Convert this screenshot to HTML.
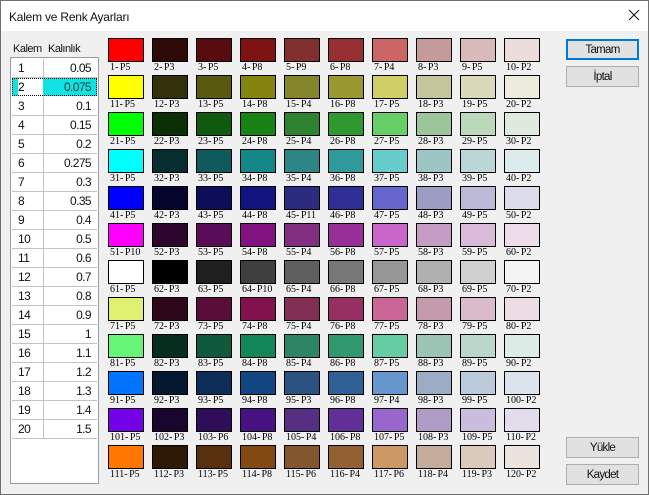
<!DOCTYPE html>
<html lang="tr"><head><meta charset="utf-8"><title>Kalem ve Renk Ayarları</title>
<style>
*{box-sizing:border-box}
html,body{margin:0;padding:0;width:649px;height:495px;overflow:hidden;background:#f0f0f0}
body{position:relative;font-family:"Liberation Sans",sans-serif;color:#000}
.win{position:absolute;left:0;top:0;width:649px;height:495px;border:1px solid #6f6f6f;background:#f0f0f0}
.tb{position:absolute;left:1px;top:1px;width:647px;height:30px;background:#fff}
.ttl{position:absolute;left:8px;top:8px;font-size:12px;letter-spacing:-.22px;line-height:16px;color:#111}
.x{position:absolute;left:627px;top:8px}
.hd{position:absolute;top:42px;font-size:11px;letter-spacing:-.5px;line-height:14px;color:#111}
.list{position:absolute;left:10px;top:57px;width:89px;height:427px;background:#fff;border:1px solid #9a9ca3}
.r{position:absolute;left:1px;width:85px;height:19px;border-bottom:1px solid #c2c2c2;font-size:12px;line-height:19px;color:#111}
.r s{position:absolute;left:31px;top:0;width:1px;height:19px;background:#c2c2c2}
.r u{position:absolute;left:6px;top:0;text-decoration:none;letter-spacing:-.5px}
.r b{position:absolute;right:6px;top:0;font-weight:normal;letter-spacing:-.6px}
.sel{position:absolute;left:1px;top:20px;width:85px;height:18px;border:1px dotted #000;background:linear-gradient(90deg,#12e2e2 0 5px,#fff 5px 30px,#12e2e2 30px);font-size:12px;line-height:17px}
.sel u{position:absolute;left:5px;top:0;text-decoration:none}
.sel b{position:absolute;right:5px;top:0;font-weight:normal;color:#063c3c;letter-spacing:-.6px}
.g{position:absolute;left:108px;top:38px;display:grid;grid-template-columns:repeat(10,44px);grid-auto-rows:37px}
.g div{position:relative;width:44px;height:37px}
.g i{display:block;width:36px;height:24px;border:1px solid #000}
.g b{position:absolute;left:2px;top:23px;font:normal 10px/13px "Liberation Serif",serif;white-space:pre;word-spacing:-1px;color:#000}
.btn{position:absolute;left:566px;width:73px;height:21px;background:#e1e1e1;border:1px solid #adadad;font-size:11.5px;letter-spacing:-.7px;line-height:21px;text-align:center;color:#111}
.def{border:2px solid #0078d7;line-height:19px}
</style></head><body>
<div class="win"></div>
<div class="tb"><div class="ttl">Kalem ve Renk Ayarları</div>
<svg class="x" width="12" height="12" viewBox="0 0 12 12"><path d="M1 1L11 11M11 1L1 11" stroke="#111" stroke-width="1" fill="none"/></svg></div>
<div class="hd" style="left:13px">Kalem</div><div class="hd" style="left:48px">Kalınlık</div>
<div class="list">
<div class="r" style="top:1px"><s></s><u>1</u><b>0.05</b></div>
<div class="sel"><u>2</u><b>0.075</b></div>
<div class="r" style="top:39px"><s></s><u>3</u><b>0.1</b></div>
<div class="r" style="top:58px"><s></s><u>4</u><b>0.15</b></div>
<div class="r" style="top:77px"><s></s><u>5</u><b>0.2</b></div>
<div class="r" style="top:96px"><s></s><u>6</u><b>0.275</b></div>
<div class="r" style="top:115px"><s></s><u>7</u><b>0.3</b></div>
<div class="r" style="top:134px"><s></s><u>8</u><b>0.35</b></div>
<div class="r" style="top:153px"><s></s><u>9</u><b>0.4</b></div>
<div class="r" style="top:172px"><s></s><u>10</u><b>0.5</b></div>
<div class="r" style="top:191px"><s></s><u>11</u><b>0.6</b></div>
<div class="r" style="top:210px"><s></s><u>12</u><b>0.7</b></div>
<div class="r" style="top:229px"><s></s><u>13</u><b>0.8</b></div>
<div class="r" style="top:248px"><s></s><u>14</u><b>0.9</b></div>
<div class="r" style="top:267px"><s></s><u>15</u><b>1</b></div>
<div class="r" style="top:286px"><s></s><u>16</u><b>1.1</b></div>
<div class="r" style="top:305px"><s></s><u>17</u><b>1.2</b></div>
<div class="r" style="top:324px"><s></s><u>18</u><b>1.3</b></div>
<div class="r" style="top:343px"><s></s><u>19</u><b>1.4</b></div>
<div class="r" style="top:362px"><s></s><u>20</u><b>1.5</b></div>
</div>
<div class="g">
<div><i style="background:#ff0000"></i><b>1- P5</b></div><div><i style="background:#2d0a06"></i><b>2- P3</b></div><div><i style="background:#590c10"></i><b>3- P5</b></div><div><i style="background:#7f1212"></i><b>4- P8</b></div><div><i style="background:#822f2f"></i><b>5- P9</b></div><div><i style="background:#972f32"></i><b>6- P8</b></div><div><i style="background:#cc6666"></i><b>7- P4</b></div><div><i style="background:#c49a9a"></i><b>8- P3</b></div><div><i style="background:#d9baba"></i><b>9- P5</b></div><div><i style="background:#ecdcdc"></i><b>10- P2</b></div>
<div><i style="background:#ffff00"></i><b>11- P5</b></div><div><i style="background:#33300a"></i><b>12- P3</b></div><div><i style="background:#5a5a0e"></i><b>13- P5</b></div><div><i style="background:#84840f"></i><b>14- P8</b></div><div><i style="background:#85852c"></i><b>15- P4</b></div><div><i style="background:#99992f"></i><b>16- P8</b></div><div><i style="background:#cfcf66"></i><b>17- P5</b></div><div><i style="background:#c5c59b"></i><b>18- P3</b></div><div><i style="background:#dadabb"></i><b>19- P5</b></div><div><i style="background:#ecebdc"></i><b>20- P2</b></div>
<div><i style="background:#00ff00"></i><b>21- P5</b></div><div><i style="background:#0a2e06"></i><b>22- P3</b></div><div><i style="background:#0f5a0e"></i><b>23- P5</b></div><div><i style="background:#188314"></i><b>24- P8</b></div><div><i style="background:#2e8230"></i><b>25- P4</b></div><div><i style="background:#2f992f"></i><b>26- P8</b></div><div><i style="background:#66cf66"></i><b>27- P5</b></div><div><i style="background:#9dc59b"></i><b>28- P3</b></div><div><i style="background:#bbd8bb"></i><b>29- P5</b></div><div><i style="background:#ddeadd"></i><b>30- P2</b></div>
<div><i style="background:#00ffff"></i><b>31- P5</b></div><div><i style="background:#062d30"></i><b>32- P3</b></div><div><i style="background:#0f5a5c"></i><b>33- P5</b></div><div><i style="background:#138787"></i><b>34- P8</b></div><div><i style="background:#2e8585"></i><b>35- P4</b></div><div><i style="background:#309999"></i><b>36- P8</b></div><div><i style="background:#66cccc"></i><b>37- P5</b></div><div><i style="background:#9cc5c5"></i><b>38- P3</b></div><div><i style="background:#bbd6d6"></i><b>39- P5</b></div><div><i style="background:#dcecec"></i><b>40- P2</b></div>
<div><i style="background:#0000ff"></i><b>41- P5</b></div><div><i style="background:#05052d"></i><b>42- P3</b></div><div><i style="background:#0d0d59"></i><b>43- P5</b></div><div><i style="background:#13137f"></i><b>44- P8</b></div><div><i style="background:#2b2b80"></i><b>45- P11</b></div><div><i style="background:#302f96"></i><b>46- P8</b></div><div><i style="background:#6666cc"></i><b>47- P5</b></div><div><i style="background:#9d9dc4"></i><b>48- P3</b></div><div><i style="background:#bbbbd8"></i><b>49- P5</b></div><div><i style="background:#dcdcea"></i><b>50- P2</b></div>
<div><i style="background:#ff00ff"></i><b>51- P10</b></div><div><i style="background:#2d062d"></i><b>52- P3</b></div><div><i style="background:#590d59"></i><b>53- P5</b></div><div><i style="background:#821482"></i><b>54- P8</b></div><div><i style="background:#822f82"></i><b>55- P4</b></div><div><i style="background:#962f96"></i><b>56- P8</b></div><div><i style="background:#c966c9"></i><b>57- P5</b></div><div><i style="background:#c49cc4"></i><b>58- P3</b></div><div><i style="background:#d9bbd9"></i><b>59- P5</b></div><div><i style="background:#ecdcec"></i><b>60- P2</b></div>
<div><i style="background:#ffffff"></i><b>61- P5</b></div><div><i style="background:#000000"></i><b>62- P3</b></div><div><i style="background:#1f1f1f"></i><b>63- P5</b></div><div><i style="background:#3f3f3f"></i><b>64- P10</b></div><div><i style="background:#5f5f5f"></i><b>65- P4</b></div><div><i style="background:#787878"></i><b>66- P8</b></div><div><i style="background:#979797"></i><b>67- P5</b></div><div><i style="background:#b0b0b0"></i><b>68- P3</b></div><div><i style="background:#d0d0d0"></i><b>69- P5</b></div><div><i style="background:#f4f4f4"></i><b>70- P2</b></div>
<div><i style="background:#e0f070"></i><b>71- P5</b></div><div><i style="background:#2d0619"></i><b>72- P3</b></div><div><i style="background:#590d38"></i><b>73- P5</b></div><div><i style="background:#82124e"></i><b>74- P8</b></div><div><i style="background:#822f56"></i><b>75- P4</b></div><div><i style="background:#962f62"></i><b>76- P8</b></div><div><i style="background:#c96696"></i><b>77- P5</b></div><div><i style="background:#c49aac"></i><b>78- P3</b></div><div><i style="background:#d9bbcb"></i><b>79- P5</b></div><div><i style="background:#ecdce4"></i><b>80- P2</b></div>
<div><i style="background:#66f576"></i><b>81- P5</b></div><div><i style="background:#062d1e"></i><b>82- P3</b></div><div><i style="background:#0f5a3c"></i><b>83- P5</b></div><div><i style="background:#138759"></i><b>84- P8</b></div><div><i style="background:#2e8566"></i><b>85- P4</b></div><div><i style="background:#309970"></i><b>86- P8</b></div><div><i style="background:#66cca3"></i><b>87- P5</b></div><div><i style="background:#9cc4b2"></i><b>88- P3</b></div><div><i style="background:#bbd6ca"></i><b>89- P5</b></div><div><i style="background:#dcebe5"></i><b>90- P2</b></div>
<div><i style="background:#0073ff"></i><b>91- P5</b></div><div><i style="background:#05182f"></i><b>92- P3</b></div><div><i style="background:#0d2e59"></i><b>93- P5</b></div><div><i style="background:#124682"></i><b>94- P8</b></div><div><i style="background:#2c5282"></i><b>95- P3</b></div><div><i style="background:#2f6196"></i><b>96- P8</b></div><div><i style="background:#6696cc"></i><b>97- P4</b></div><div><i style="background:#9cacc4"></i><b>98- P3</b></div><div><i style="background:#bccbdc"></i><b>99- P5</b></div><div><i style="background:#dce3ec"></i><b>100- P2</b></div>
<div><i style="background:#7300e6"></i><b>101- P5</b></div><div><i style="background:#19052d"></i><b>102- P3</b></div><div><i style="background:#2f0d59"></i><b>103- P6</b></div><div><i style="background:#461282"></i><b>104- P8</b></div><div><i style="background:#562f82"></i><b>105- P4</b></div><div><i style="background:#622f96"></i><b>106- P8</b></div><div><i style="background:#9966cc"></i><b>107- P5</b></div><div><i style="background:#b09cc4"></i><b>108- P3</b></div><div><i style="background:#cbbbdc"></i><b>109- P5</b></div><div><i style="background:#e3dcec"></i><b>110- P2</b></div>
<div><i style="background:#ff7700"></i><b>111- P5</b></div><div><i style="background:#2d1906"></i><b>112- P3</b></div><div><i style="background:#59300d"></i><b>113- P5</b></div><div><i style="background:#824a12"></i><b>114- P8</b></div><div><i style="background:#82562f"></i><b>115- P6</b></div><div><i style="background:#936032"></i><b>116- P4</b></div><div><i style="background:#cc9966"></i><b>117- P6</b></div><div><i style="background:#c4ac9a"></i><b>118- P4</b></div><div><i style="background:#d9cabb"></i><b>119- P3</b></div><div><i style="background:#ece4dc"></i><b>120- P2</b></div>
</div>
<div class="btn def" style="top:39px">Tamam</div>
<div class="btn" style="top:66px">İptal</div>
<div class="btn" style="top:437px">Yükle</div>
<div class="btn" style="top:464px">Kaydet</div>
</body></html>
